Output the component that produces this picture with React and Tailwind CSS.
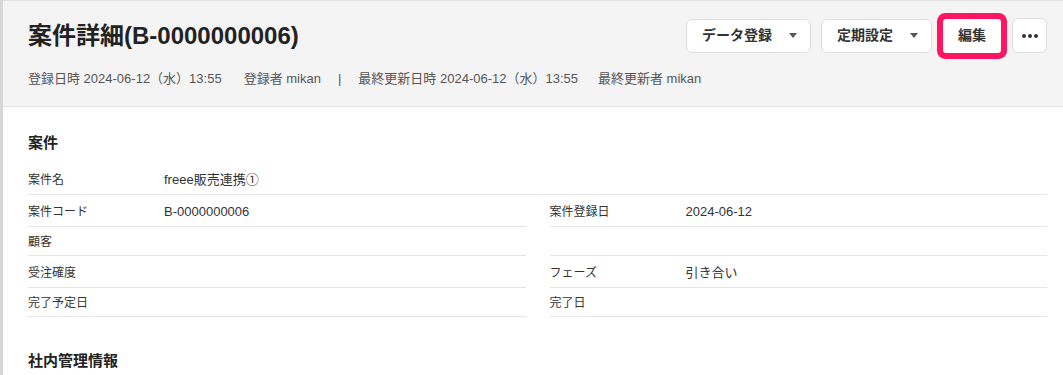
import React from 'react';

function Caret() {
  return (
    <svg width="8" height="5" viewBox="0 0 8 5" className="shrink-0">
      <path d="M0 0h8L4 5z" fill="#555" />
    </svg>
  );
}

function DropButton({ label }) {
  return (
    <button className="flex h-[34px] items-center gap-[17px] rounded-[6px] border border-[#dcdcdc] bg-white pl-[15px] pr-[13px] text-[14px] font-semibold text-[#333]">
      <span>{label}</span>
      <Caret />
    </button>
  );
}

// tall = row has a value somewhere, so both cells get the taller height
const rows = [
  { tall: true, left: ['案件コード', 'B-0000000006'], right: ['案件登録日', '2024-06-12'] },
  { tall: false, left: ['顧客', ''], right: ['', ''] },
  { tall: true, left: ['受注確度', ''], right: ['フェーズ', '引き合い'] },
  { tall: false, left: ['完了予定日', ''], right: ['完了日', ''] },
];

function Cell({ label, value, tall }) {
  return (
    <div
      className={
        'flex items-center border-b border-[#e5e5e5] pt-[2px] ' +
        (tall ? 'h-[32px]' : 'h-[29px]')
      }
    >
      <div className="w-[136px] shrink-0 text-[12px] leading-[14px] text-[#333]">{label}</div>
      {value && <div className="text-[13px] leading-[17px] text-[#333]">{value}</div>}
    </div>
  );
}

export default function App() {
  return (
    <div className="flex min-h-[375px] bg-white font-['Liberation_Sans','Noto_Sans_CJK_JP',sans-serif]">
      <div className="w-[3px] shrink-0 bg-[#d6d6d6]" />
      <div className="flex-1">
        {/* header */}
        <div className="border-t border-b border-[#e3e3e3] bg-[#f5f4f5] pl-[25px] pr-[16px] pt-[17px] pb-[18px]">
          <div className="flex items-center justify-between">
            <h1 className="text-[24px] font-bold leading-[32px] text-[#222]">案件詳細(B-0000000006)</h1>
            <div className="flex items-center gap-[10px]">
              <DropButton label="データ登録" />
              <DropButton label="定期設定" />
              <button className="ml-[1px] h-[34px] rounded-[3px] bg-white px-[15px] text-[14px] font-semibold text-[#333] ring-[6px] ring-[#ff1560]">
                編集
              </button>
              <button className="ml-[1px] flex h-[35px] w-[35px] items-center justify-center rounded-[6px] border border-[#dcdcdc] bg-white">
                <svg width="16" height="4" viewBox="0 0 16 4">
                  <circle cx="2" cy="2" r="2" fill="#333" />
                  <circle cx="8" cy="2" r="2" fill="#333" />
                  <circle cx="14" cy="2" r="2" fill="#333" />
                </svg>
              </button>
            </div>
          </div>
          <div className="mt-[17px] flex items-center text-[13px] leading-[18px] text-[#555]">
            <span>登録日時 2024-06-12（水）13:55</span>
            <span className="ml-[22px]">登録者 mikan</span>
            <span className="mx-[17px]">|</span>
            <span>最終更新日時 2024-06-12（水）13:55</span>
            <span className="ml-[20px]">最終更新者 mikan</span>
          </div>
        </div>

        {/* body */}
        <div className="pl-[25px] pr-[16px] pt-[26px]">
          <h2 className="text-[15px] font-bold leading-[20px] text-[#222]">案件</h2>
          <div className="mt-[10px] grid grid-cols-2 gap-x-[24px]">
            <div className="col-span-2">
              <Cell label="案件名" value="freee販売連携①" tall />
            </div>
            {rows.map((r, i) => (
              <React.Fragment key={i}>
                <Cell label={r.left[0]} value={r.left[1]} tall={r.tall} />
                <Cell label={r.right[0]} value={r.right[1]} tall={r.tall} />
              </React.Fragment>
            ))}
          </div>
          <h2 className="mt-[34px] text-[15px] font-bold leading-[20px] text-[#222]">社内管理情報</h2>
        </div>
      </div>
    </div>
  );
}
